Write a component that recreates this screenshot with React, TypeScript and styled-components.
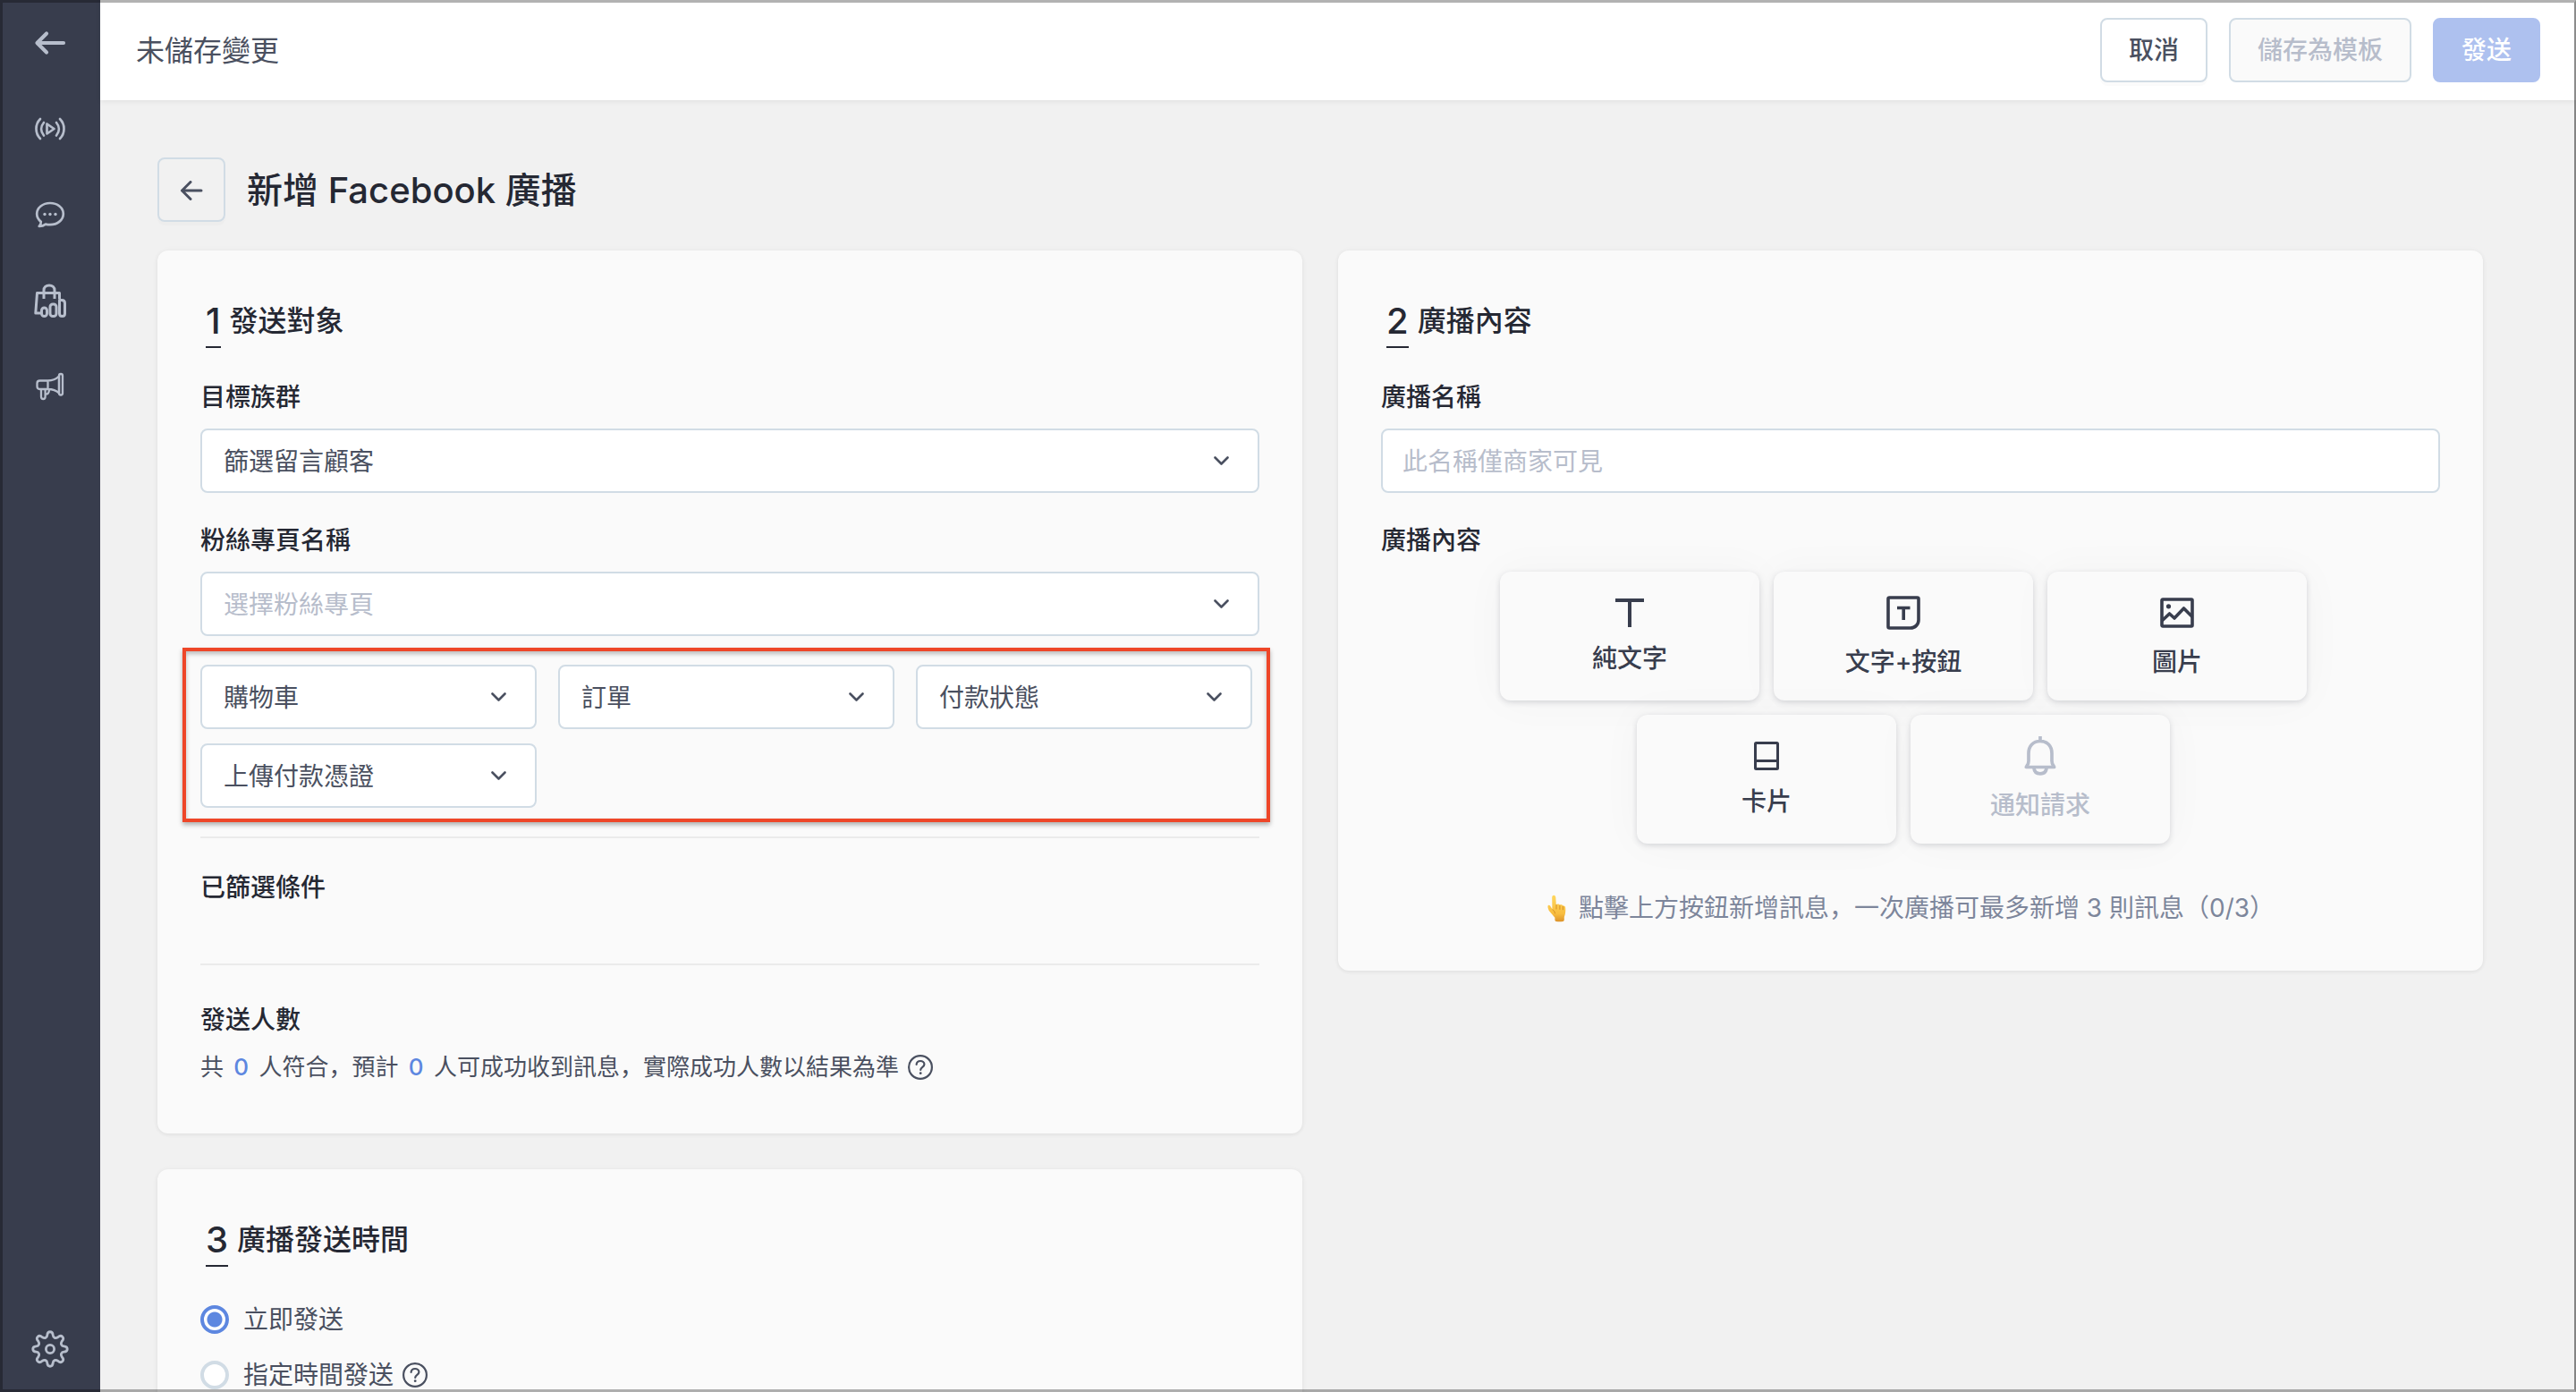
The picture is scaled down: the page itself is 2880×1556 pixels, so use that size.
import React, { useState } from "react";
import styled, { createGlobalStyle, css } from "styled-components";

const color = {
  nav: "#383d4d",
  navIcon: "#b7becc",
  ink: "#252833",
  text: "#4a5060",
  muted: "#7d869b",
  faint: "#b7bdcb",
  line: "#d1dce5",
  rule: "#ebebeb",
  page: "#f1f1f1",
  card: "#fafafa",
  blue: "#5d87e0",
  blueSoft: "#aec1ef",
  alert: "#ee4628",
};

const GlobalStyle = createGlobalStyle`
  *, *::before, *::after { box-sizing: border-box; }
  body {
    margin: 0;
    background: ${color.page};
    color: ${color.text};
    font-family: Inter, "Noto Sans CJK SC", "Noto Sans CJK TC", sans-serif;
    font-size: 28px;
    line-height: 40px;
  }
  button, input, select { font: inherit; color: inherit; margin: 0; }
  h1, h2, h3, p { margin: 0; font-weight: 400; }
`;

const Shell = styled.div`
  display: flex;
  height: 100vh;
  overflow: hidden;
`;

const WindowEdge = styled.div`
  position: fixed;
  inset: 0;
  border: 3px solid rgba(0, 0, 0, 0.3);
  border-right: 2px solid rgba(0, 0, 0, 0.45);
  pointer-events: none;
  z-index: 10;
`;

const Nav = styled.nav`
  flex: none;
  width: 112px;
  display: flex;
  flex-direction: column;
  background: ${color.nav};
`;

const NavLink = styled.a<{ $last?: boolean }>`
  display: flex;
  align-items: center;
  justify-content: center;
  height: 96px;
  color: ${color.navIcon};
  ${(p) => p.$last && css`margin-top: auto;`}
`;

const Column = styled.div`
  flex: 1;
  min-width: 0;
  display: flex;
  flex-direction: column;
`;

const TopBar = styled.header`
  flex: none;
  display: flex;
  align-items: center;
  gap: 24px;
  height: 112px;
  padding: 0 40px;
  background: #fff;
  box-shadow: 0 1px 6px rgba(0, 0, 0, 0.08);
  z-index: 1;
`;

const Status = styled.p`
  margin-right: auto;
  padding-top: 2px;
  font-size: 32px;
`;

const Button = styled.button<{ $kind?: "plain" | "primary" }>`
  height: 72px;
  padding: 0 30px;
  border: 2px solid ${color.line};
  border-radius: 8px;
  background: #fff;
  font-weight: 500;
  box-shadow: 0 4px 0 rgba(0, 0, 0, 0.015);
  &:disabled {
    background: ${color.card};
    color: ${color.faint};
    box-shadow: none;
  }
  ${(p) =>
    p.$kind === "primary" &&
    css`
      &, &:disabled {
        border-color: ${color.blueSoft};
        background: ${color.blueSoft};
        color: #fff;
        box-shadow: none;
      }
    `}
`;

const Main = styled.main`
  flex: 1;
  min-height: 0;
  overflow: hidden;
  padding: 64px 104px 0 64px;
`;

const TitleRow = styled.div`
  display: flex;
  align-items: center;
  gap: 24px;
  margin-bottom: 32px;
`;

const BackButton = styled.button`
  display: flex;
  align-items: center;
  justify-content: center;
  width: 76px;
  height: 72px;
  padding: 2px 0 0;
  border: 2px solid ${color.line};
  border-radius: 8px;
  background: none;
  box-shadow: 0 4px 0 rgba(0, 0, 0, 0.015);
`;

const Title = styled.h1`
  padding-top: 2px;
  font-size: 40px;
  line-height: 56px;
  font-weight: 500;
  color: ${color.ink};
`;

const Columns = styled.div`
  display: grid;
  grid-template-columns: 1fr 1fr;
  align-items: start;
  gap: 40px;
`;

const Stack = styled.div`
  display: grid;
  gap: 40px;
`;

const Card = styled.section`
  padding: 51px 48px 50px;
  border-radius: 12px;
  background: ${color.card};
  box-shadow: 0 1px 4px rgba(0, 0, 0, 0.08), 0 0 16px rgba(0, 0, 0, 0.015);
`;

const CardTitle = styled.h2`
  display: flex;
  gap: 10px;
  margin-bottom: 34px;
  padding-left: 6px;
  font-size: 32px;
  line-height: 56px;
  font-weight: 500;
  color: ${color.ink};
`;

const Step = styled.span`
  border-bottom: 2px solid ${color.ink};
  font-size: 40px;
`;

const Field = styled.div`
  display: grid;
  gap: 14px;
  margin-bottom: 32px;
`;

const labelText = css`
  font-size: 28px;
  line-height: 42px;
  font-weight: 500;
  color: ${color.ink};
`;
const Label = styled.label`${labelText}`;
const SubTitle = styled.h3`${labelText}`;

const control = css`
  width: 100%;
  height: 72px;
  border: 2px solid ${color.line};
  border-radius: 8px;
  background: #fff;
  outline: none;
`;

const TextInput = styled.input`
  ${control}
  padding: 2px 22px 0;
  &::placeholder { color: ${color.faint}; opacity: 1; }
`;

const SelectBox = styled.div`
  position: relative;
  svg {
    position: absolute;
    top: 31px;
    right: 34px;
    pointer-events: none;
  }
`;

const NativeSelect = styled.select<{ $empty?: boolean }>`
  ${control}
  appearance: none;
  padding: 2px 64px 0 24px;
  color: ${(p) => (p.$empty ? color.faint : color.text)};
`;

const Filters = styled.div`
  position: relative;
  display: grid;
  grid-template-columns: repeat(3, 1fr);
  gap: 16px 24px;
  padding-right: 8px;
  margin-bottom: 32px;
`;

const Highlight = styled.div`
  position: absolute;
  inset: -19px -12px -16px -20px;
  border: 4px solid ${color.alert};
  box-shadow: 0 3px 5px rgba(0, 0, 0, 0.3), inset 0 3px 5px rgba(0, 0, 0, 0.25);
  pointer-events: none;
`;

const Rule = styled.hr`
  width: 100%;
  height: 2px;
  margin: 0;
  border: 0;
  background: ${color.rule};
`;

const Conditions = styled.div`
  height: 140px;
  padding-top: 34px;
`;

const Reach = styled.div`
  display: grid;
  gap: 12px;
  padding: 40px 0 4px;
`;

const ReachText = styled.p`
  display: flex;
  align-items: center;
  gap: 10px;
  font-size: 26px;
`;

const Count = styled.span`
  margin: 0 4px;
  font-weight: 500;
  color: ${color.blue};
`;

const Tiles = styled.div`
  display: flex;
  flex-wrap: wrap;
  justify-content: center;
`;

const Tile = styled.button`
  display: flex;
  flex-direction: column;
  align-items: center;
  justify-content: center;
  gap: 10px;
  width: 290px;
  height: 144px;
  margin: 0 16px 16px 0;
  padding: 0;
  border: 0;
  border-radius: 12px;
  background: ${color.card};
  color: ${color.nav};
  line-height: 42px;
  font-weight: 500;
  box-shadow: 0 2px 6px rgba(56, 61, 77, 0.18), 0 0 48px rgba(0, 0, 0, 0.035);
  &:disabled { color: ${color.faint}; }
`;

const TileIcon = styled.span<{ $size: number }>`
  display: flex;
  align-items: center;
  justify-content: center;
  height: ${(p) => p.$size}px;
`;

const Hint = styled.p`
  display: flex;
  align-items: center;
  justify-content: center;
  gap: 8px;
  padding: 4px 0 0;
  color: ${color.muted};
`;

const Options = styled.div`
  display: grid;
  gap: 22px;
  padding-top: 5px;
`;

const Option = styled.div`
  display: flex;
  align-items: center;
  gap: 10px;
  label { display: flex; align-items: center; gap: 16px; }
`;

const Radio = styled.input`
  appearance: none;
  width: 32px;
  height: 32px;
  border: 4px solid ${color.line};
  border-radius: 50%;
  background: #fff;
  &:checked {
    border-color: ${color.blue};
    background: radial-gradient(circle, ${color.blue} 8px, #fff 9px);
  }
`;

const Chevron = () => (
  <svg width="17" height="10" viewBox="0 0 17 10" fill="none" stroke={color.text} strokeWidth="2.6" strokeLinecap="round" strokeLinejoin="round">
    <path d="M1.5 1.5l7 7 7-7" />
  </svg>
);

const Help = () => (
  <svg width="28" height="28" viewBox="0 0 28 28" fill="none" stroke={color.text} strokeWidth="2.2" strokeLinecap="round">
    <circle cx="14" cy="14" r="12.900" />
    <path d="M9.600 10.800c.3-2.400 2-3.800 4.400-3.800 2.500 0 4.400 1.500 4.400 3.700 0 3.200-4.200 3.100-4.200 6.300" />
    <circle cx="14.200" cy="20.700" r="1.400" fill={color.text} stroke="none" />
  </svg>
);

const NavArrow = () => (
  <svg width="36" height="28" viewBox="0 0 36 28" fill="none" stroke="currentColor" strokeWidth="4.200" strokeLinecap="round" strokeLinejoin="round">
    <path d="M33 14H4M14 3.500L3.500 14 14 24.500" />
  </svg>
);

const NavLive = () => (
  <svg width="36" height="28" viewBox="0 0 36 28" fill="none" stroke="currentColor" strokeWidth="2.700" strokeLinecap="round" strokeLinejoin="round">
    <path d="M14.500 8.500v11l8-5.500zM7 3c-6 6-6 16 0 22M29 3c6 6 6 16 0 22M11 7c-3.800 4.500-3.800 10 0 14.500M25 7c3.800 4.500 3.800 10 0 14.500" />
  </svg>
);

const NavChat = () => (
  <svg width="34" height="32" viewBox="0 0 34 32" fill="none" stroke="currentColor" strokeWidth="2.700" strokeLinejoin="round">
    <path d="M17 3C8.700 3 2.200 8.300 2.200 15c0 3.600 1.700 6.600 4.600 8.800.2 2-.6 3.700-2.100 5.100 3 .1 5.200-.7 7.300-2.300 1.600.4 3.200.6 5 .6 8.300 0 14.800-5.400 14.800-12.200S25.300 3 17 3z" />
    <g fill="currentColor" stroke="none">
      <circle cx="11" cy="15.500" r="1.700" /><circle cx="17" cy="15.500" r="1.700" /><circle cx="23" cy="15.500" r="1.700" />
    </g>
  </svg>
);

const NavShop = () => (
  <svg width="36" height="40" viewBox="0 0 36 40" fill="none" stroke="currentColor" strokeWidth="3" strokeLinejoin="round">
    <path d="M8 34H1.800L3.500 11.500h25v7M11 18v-9.500C11 5 13.500 3 17 3s6 2 6 5.500V18" />
    <rect x="8.500" y="28" width="6" height="9.500" rx="3" />
    <rect x="18" y="24" width="7" height="13.500" rx="3" />
    <path d="M28.500 19.500h2.500c2.200 0 3.500 1.300 3.500 3.500v11.500c0 1.800-1.200 3-3 3s-3-1.200-3-3z" />
  </svg>
);

const NavMegaphone = () => (
  <svg width="32" height="32" viewBox="0 0 32 32" fill="none" stroke="currentColor" strokeWidth="2.300" strokeLinejoin="round">
    <path d="M4.500 9.500h9v9.500h-9c-2 0-3-1-3-3v-3.500c0-2 1-3 3-3zM13.500 9.500c5 0 9-1.500 12.500-5v19c-3.500-3.500-7.500-4.500-12.500-4.500" />
    <rect x="26" y="2" width="4" height="23.500" rx="2" />
    <path d="M6 19v8.500c0 1.500 1 2.500 2.300 2.500s2.300-1 2.300-2.500V19M10.600 24.500c3 .2 4.400-1.300 4.400-5.500" />
  </svg>
);

const NavGear = () => (
  <svg width="42" height="42" viewBox="-21 -21 42 42" fill="none" stroke="currentColor" strokeWidth="2.800" strokeLinejoin="round">
    <circle r="4.600" />
    <path d="M-3.200 -15.500C-2.800 -20.500 2.800 -20.500 3.200 -15.500C3.500 -12.500 6 -11.500 8.700 -13.200C12.700 -16.800 16.800 -12.700 13.200 -8.700C11.500 -6 12.500 -3.500 15.500 -3.200C20.500 -2.800 20.500 2.800 15.500 3.200C12.500 3.500 11.500 6 13.200 8.700C16.800 12.700 12.700 16.800 8.700 13.200C6 11.500 3.500 12.500 3.200 15.500C2.800 20.500 -2.800 20.500 -3.200 15.500C-3.500 12.500 -6 11.500 -8.700 13.200C-12.700 16.800 -16.800 12.700 -13.200 8.700C-11.500 6 -12.500 3.500 -15.500 3.200C-20.500 2.800 -20.500 -2.800 -15.500 -3.200C-12.500 -3.500 -11.500 -6 -13.200 -8.700C-16.800 -12.700 -12.700 -16.800 -8.700 -13.200C-6 -11.500 -3.500 -12.500 -3.200 -15.500Z" />
  </svg>
);

const BackArrow = () => (
  <svg width="26" height="22" viewBox="0 0 26 22" fill="none" stroke={color.text} strokeWidth="3" strokeLinecap="round" strokeLinejoin="round">
    <path d="M24 11H2.500M12 1.500L2.500 11l9.500 9.500" />
  </svg>
);

const TextIcon = () => (
  <svg width="32" height="32" viewBox="0 0 32 32" fill="none" stroke="currentColor" strokeWidth="4">
    <path d="M0 2h32M16 2v30" />
  </svg>
);

const TextButtonIcon = () => (
  <svg width="38" height="38" viewBox="0 0 38 38" fill="none" stroke="currentColor" strokeWidth="3.600" strokeLinejoin="round">
    <path d="M3.500 2h31c1 0 1.500.5 1.500 1.500V27c0 5-4 9-9 9H3.500C2.500 36 2 35.500 2 34.500v-31C2 2.500 2.500 2 3.500 2z" />
    <path d="M12 13.500h14.500M19.200 13.500V27" />
  </svg>
);

const ImageIcon = () => (
  <svg width="38" height="34" viewBox="0 0 38 34" fill="none" stroke="currentColor" strokeWidth="3.600" strokeLinejoin="round">
    <rect x="2" y="2" width="34" height="30" rx="1" />
    <circle cx="9.500" cy="9.800" r="2.600" fill="currentColor" stroke="none" />
    <path d="M2 26l8.500-8 5.500 5L26.500 12 36 21.500" />
  </svg>
);

const CardIcon = () => (
  <svg width="28" height="32" viewBox="0 0 28 32" fill="none" stroke="currentColor" strokeWidth="3">
    <rect x="1.500" y="1.500" width="25" height="29" rx="1" />
    <path d="M1.500 21.500h25" />
  </svg>
);

const BellIcon = () => (
  <svg width="36" height="44" viewBox="0 0 36 44" fill="none" stroke="currentColor" strokeWidth="3.700" strokeLinejoin="round">
    <path d="M18 0v6M18 5.500C10 5.500 5 11 5 19v8.500c0 2-.5 3.400-1.500 5L2.400 34.500h31.200l-1.100-2c-1-1.600-1.500-3-1.500-5V19c0-8-5-13.500-13-13.500z" />
    <path d="M11 35.500c.3 4 3 6.300 7 6.300s6.700-2.300 7-6.300" />
  </svg>
);

const PointUp = () => (
  <svg width="28" height="32" viewBox="0 0 28 32" aria-hidden="true">
    <defs>
      <linearGradient id="hand" x1="0" y1="0" x2="0" y2="1">
        <stop offset="0" stopColor="#ffd75e" />
        <stop offset="0.700" stopColor="#f8bd3f" />
        <stop offset="1" stopColor="#dc922a" />
      </linearGradient>
    </defs>
    <path
      fill="url(#hand)"
      d="M8.200 1.800c1.300 0 2 1 2.100 2.300l.5 8.200c1-1 3.300-1 4 .4 1.200-.9 3-.5 3.500.9 1.400-.6 2.700.2 2.800 1.800.5 4-.1 8-1.300 10.500v3.200c0 1-.5 1.700-1.500 1.900-2.500.4-5 .4-7.500 0-1-.2-1.400-.9-1.400-1.900v-2.400L3 19.300c-1-1.800-1.700-4-1.500-5.600.2-1.200 1.900-1.300 2.600-.2l2.300 3.700L6.200 4.100c0-1.300.7-2.300 2-2.300z"
    />
    <path fill="none" stroke="#cf8a22" strokeWidth="0.900" strokeLinecap="round" d="M11 12.500v4.500M14.900 13.200v4.200M18.400 14.200v3.600M7 18c1.500 1 2.300 2.300 2.500 4" />
  </svg>
);

type SelectProps = { id: string; value: string; name?: string; empty?: boolean };

const Select = ({ id, value, name, empty }: SelectProps) => (
  <SelectBox>
    <NativeSelect id={id} aria-label={name} $empty={empty} defaultValue={value}>
      <option value={value}>{value}</option>
    </NativeSelect>
    <Chevron />
  </SelectBox>
);

const navItems = [
  { id: "back", icon: <NavArrow /> },
  { id: "live", icon: <NavLive /> },
  { id: "chat", icon: <NavChat /> },
  { id: "shop", icon: <NavShop /> },
  { id: "broadcast", icon: <NavMegaphone /> },
];

const filters = ["購物車", "訂單", "付款狀態", "上傳付款憑證"];

const tiles = [
  { label: "純文字", icon: <TextIcon />, size: 40 },
  { label: "文字+按鈕", icon: <TextButtonIcon />, size: 48 },
  { label: "圖片", icon: <ImageIcon />, size: 48 },
  { label: "卡片", icon: <CardIcon />, size: 40 },
  { label: "通知請求", icon: <BellIcon />, size: 48, disabled: true },
];

export default function App() {
  const [when, setWhen] = useState("now");
  return (
    <Shell>
      <GlobalStyle />
      <Nav>
        {navItems.map((item) => (
          <NavLink key={item.id} href={`#${item.id}`}>{item.icon}</NavLink>
        ))}
        <NavLink href="#settings" $last><NavGear /></NavLink>
      </Nav>
      <Column>
        <TopBar>
          <Status>未儲存變更</Status>
          <Button type="button">取消</Button>
          <Button type="button" disabled>儲存為模板</Button>
          <Button type="button" $kind="primary" disabled>發送</Button>
        </TopBar>
        <Main>
          <TitleRow>
            <BackButton type="button"><BackArrow /></BackButton>
            <Title>新增 Facebook 廣播</Title>
          </TitleRow>
          <Columns>
            <Stack>
              <Card>
                <CardTitle><Step>1</Step>發送對象</CardTitle>
                <Field>
                  <Label htmlFor="audience">目標族群</Label>
                  <Select id="audience" value="篩選留言顧客" />
                </Field>
                <Field>
                  <Label htmlFor="fanpage">粉絲專頁名稱</Label>
                  <Select id="fanpage" value="選擇粉絲專頁" empty />
                </Field>
                <Filters>
                  {filters.map((name, i) => (
                    <Select key={name} id={`filter-${i}`} name={name} value={name} />
                  ))}
                  <Highlight />
                </Filters>
                <Rule />
                <Conditions>
                  <SubTitle>已篩選條件</SubTitle>
                </Conditions>
                <Rule />
                <Reach>
                  <SubTitle>發送人數</SubTitle>
                  <ReachText>
                    <span>
                      共 <Count>0</Count> 人符合，預計 <Count>0</Count> 人可成功收到訊息，實際成功人數以結果為準
                    </span>
                    <Help />
                  </ReachText>
                </Reach>
              </Card>
              <Card>
                <CardTitle><Step>3</Step>廣播發送時間</CardTitle>
                <Options>
                  <Option>
                    <label>
                      <Radio type="radio" name="when" checked={when === "now"} onChange={() => setWhen("now")} />
                      立即發送
                    </label>
                  </Option>
                  <Option>
                    <label>
                      <Radio type="radio" name="when" checked={when === "later"} onChange={() => setWhen("later")} />
                      指定時間發送
                    </label>
                    <Help />
                  </Option>
                </Options>
              </Card>
            </Stack>
            <Card>
              <CardTitle><Step>2</Step>廣播內容</CardTitle>
              <Field>
                <Label htmlFor="name">廣播名稱</Label>
                <TextInput id="name" type="text" placeholder="此名稱僅商家可見" />
              </Field>
              <Field>
                <SubTitle>廣播內容</SubTitle>
                <Tiles>
                  {tiles.map((tile) => (
                    <Tile key={tile.label} type="button" disabled={tile.disabled}>
                      <TileIcon $size={tile.size}>{tile.icon}</TileIcon>
                      {tile.label}
                    </Tile>
                  ))}
                </Tiles>
              </Field>
              <Hint>
                <PointUp />
                點擊上方按鈕新增訊息，一次廣播可最多新增 3 則訊息（0/3）
              </Hint>
            </Card>
          </Columns>
        </Main>
      </Column>
      <WindowEdge />
    </Shell>
  );
}
